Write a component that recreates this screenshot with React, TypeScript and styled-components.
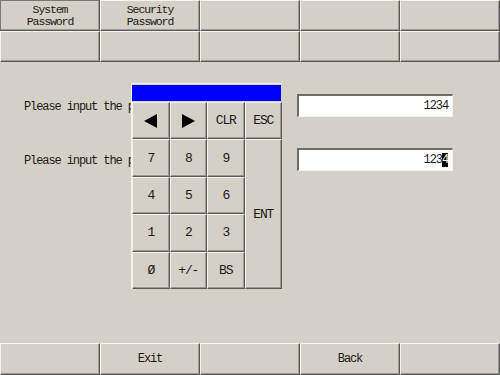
import styled, { createGlobalStyle, css } from 'styled-components';

const GlobalStyle = createGlobalStyle`
    html, body {
        margin: 0;
        padding: 0;
        background: #d4d0c8;
    }
`;

const topItems = [
    ['System', 'Password'],
    ['Security', 'Password'],
    [],
    [],
    [],
    [],
    [],
    [],
    [],
    [],
];

const bottomItems = ['', 'Exit', '', 'Back', ''];

const keys: { label: string; tall?: boolean; arrow?: 'left' | 'right' }[] = [
    { label: '', arrow: 'left' },
    { label: '', arrow: 'right' },
    { label: 'CLR' },
    { label: 'ESC' },
    { label: '7' },
    { label: '8' },
    { label: '9' },
    { label: 'ENT', tall: true },
    { label: '4' },
    { label: '5' },
    { label: '6' },
    { label: '1' },
    { label: '2' },
    { label: '3' },
    { label: 'Ø' },
    { label: '+/-' },
    { label: 'BS' },
];

function Arrow({ dir }: { dir: 'left' | 'right' }) {
    return (
        <svg width="15" height="14" viewBox="0 0 15 14">
            {dir === 'left' ? <polygon points="1,7 14,0 14,14" fill="#000" /> : <polygon points="14,7 1,0 1,14" fill="#000" />}
        </svg>
    );
}

export default function App(): JSX.Element {
    return (
        <S_Screen>
            <GlobalStyle />
            <S_TopBar>
                {topItems.map((lines, idx) => (
                    <S_PanelButton key={'top' + idx} $pressed={idx === 0}>
                        {lines.map((line) => (
                            <S_ButtonLine key={line}>{line}</S_ButtonLine>
                        ))}
                    </S_PanelButton>
                ))}
            </S_TopBar>

            <S_Main>
                {/* the keypad popup hides the rest of each prompt */}
                <S_Label>Please input the p</S_Label>
                <S_Input>1234</S_Input>
                <S_Label>Please input the p</S_Label>
                <S_Input>
                    123<S_Caret>4</S_Caret>
                </S_Input>

                <S_Keypad>
                    <S_KeypadTitle />
                    <S_KeyGrid>
                        {keys.map((k, idx) => (
                            <S_Key key={'key' + idx} $tall={k.tall}>
                                {k.arrow ? <Arrow dir={k.arrow} /> : k.label}
                            </S_Key>
                        ))}
                    </S_KeyGrid>
                </S_Keypad>
            </S_Main>

            <S_BottomBar>
                {bottomItems.map((item, idx) => (
                    <S_PanelButton key={'bottom' + idx}>{item}</S_PanelButton>
                ))}
            </S_BottomBar>
        </S_Screen>
    );
}

const pixelFont = css`
    font-family: 'Liberation Mono', 'DejaVu Sans Mono', monospace;
    font-size: 12px;
    letter-spacing: -1.1px;
    color: #1a1a1a;
`;

const raised = css`
    background: #d4d0c8;
    border-top: 1px solid #f4f3f0;
    border-left: 1px solid #f4f3f0;
    border-right: 1px solid #5a5a5a;
    border-bottom: 1px solid #5a5a5a;
    box-shadow: inset -1px -1px 0 #9c9a96;
`;

const S_Screen = styled.div`
    width: 500px;
    height: 375px;
    display: flex;
    flex-direction: column;
    background: #d4d0c8;
    overflow: hidden;
`;

const S_TopBar = styled.div`
    display: grid;
    grid-template-columns: repeat(5, 100px);
    grid-template-rows: 31px 31px;
`;

const S_PanelButton = styled.div<{ $pressed?: boolean }>`
    ${raised}
    ${pixelFont}
    box-sizing: border-box;
    display: flex;
    flex-direction: column;
    align-items: center;
    justify-content: center;
    line-height: 14px;
    ${(props) =>
        props.$pressed &&
        css`
            border-top-color: #7a7874;
            border-left-color: #7a7874;
        `}
`;

const S_ButtonLine = styled.span`
    display: block;
    height: 12px;
    line-height: 12px;
    font-size: 11.5px;
`;

const S_Main = styled.div`
    position: relative;
    flex: 1;
    display: grid;
    grid-template-columns: 273px 156px;
    grid-auto-rows: 23px;
    row-gap: 31px;
    align-content: start;
    padding: 32px 0 0 24px;
`;

const S_Label = styled.div`
    ${pixelFont}
    display: flex;
    align-items: center;
    padding-top: 2px;
    white-space: nowrap;
    overflow: hidden;
`;

const S_Input = styled.div`
    ${pixelFont}
    box-sizing: border-box;
    background: #fff;
    border-top: 2px solid #6e6c68;
    border-left: 2px solid #6e6c68;
    border-right: 1px solid #f4f3f0;
    border-bottom: 1px solid #f4f3f0;
    display: flex;
    align-items: center;
    justify-content: flex-end;
    padding-right: 4px;
`;

const S_Caret = styled.span`
    background: #000;
    color: #fff;
`;

const S_Keypad = styled.div`
    position: absolute;
    left: 131px;
    top: 21px;
    width: 151px;
    background: #d4d0c8;
    border-top: 1px solid #f4f3f0;
    border-left: 1px solid #f4f3f0;
    box-sizing: border-box;
`;

const S_KeypadTitle = styled.div`
    height: 16px;
    margin: 1px 1px 1px 0;
    background: #0000ff;
`;

const S_KeyGrid = styled.div`
    display: grid;
    grid-template-columns: repeat(4, 37.5px);
    grid-template-rows: repeat(5, 37.4px);
    grid-auto-flow: row dense;
`;

const S_Key = styled.div<{ $tall?: boolean }>`
    ${raised}
    ${pixelFont}
    box-sizing: border-box;
    display: flex;
    align-items: center;
    justify-content: center;
    font-size: 13px;
    ${(props) =>
        props.$tall &&
        css`
            grid-column: 4;
            grid-row: 2 / span 4;
        `}
`;

const S_BottomBar = styled.div`
    display: grid;
    grid-template-columns: repeat(5, 100px);
    grid-template-rows: 32px;
`;
